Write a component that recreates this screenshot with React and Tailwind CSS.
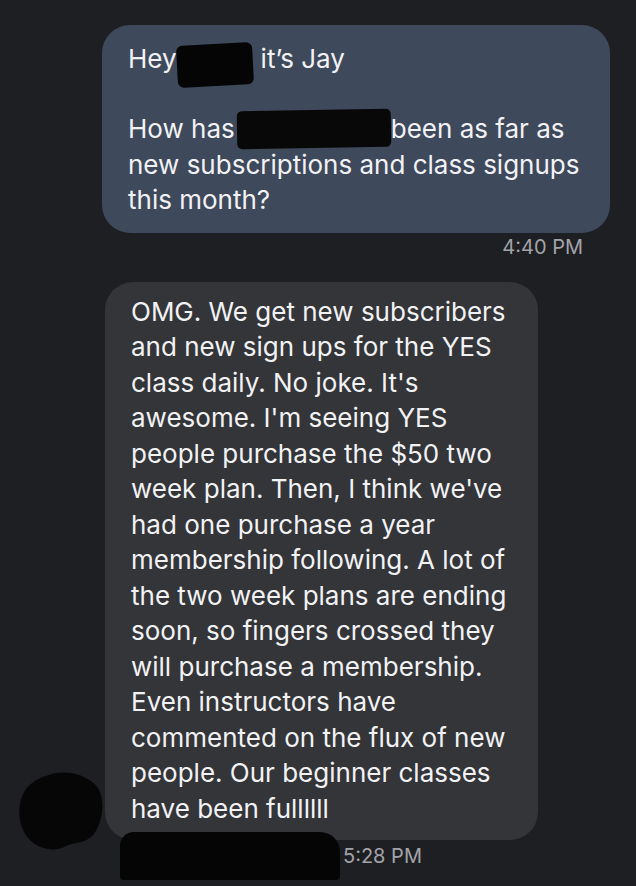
export default function App() {
    const reply = [
        'OMG. We get new subscribers',
        'and new sign ups for the YES',
        "class daily. No joke. It's",
        "awesome. I'm seeing YES",
        'people purchase the $50 two',
        "week plan. Then, I think we've",
        'had one purchase a year',
        'membership following. A lot of',
        'the two week plans are ending',
        'soon, so fingers crossed they',
        'will purchase a membership.',
        'Even instructors have',
        'commented on the flux of new',
        'people. Our beginner classes',
        'have been fullllll',
    ];

    return (
        <div
            className="relative w-[636px] h-[886px] overflow-hidden bg-[#1e1f23] text-white"
            style={{ fontFamily: 'Inter, "Liberation Sans", sans-serif' }}
        >
            <div className="pt-[25px] flex flex-col">
                {/* sent */}
                <div className="ml-[102px] w-[508px] rounded-[28px] bg-[#3e495c] px-[26px] py-[15px] text-[26px] leading-[35.5px] text-[#f2f2f4]">
                    <div className="h-[35.5px] whitespace-nowrap">
                        <span>Hey</span>
                        <span className="inline-block align-middle w-[76px] h-[42px] translate-y-[4px] -rotate-3 rounded-[6px] bg-[#050505]" />
                        <span className="ml-[8px]">it’s Jay</span>
                    </div>
                    <div className="h-[35.5px]" />
                    <div className="h-[35.5px] whitespace-nowrap">
                        <span>How has</span>
                        <span className="inline-block align-middle w-[154px] h-[38px] ml-[2px] -translate-y-[2px] -rotate-1 rounded-[5px] bg-[#080808]" />
                        <span>been as far as</span>
                    </div>
                    <div>new subscriptions and class signups</div>
                    <div>this month?</div>
                </div>
                <div className="mt-[1px] mr-[53px] text-right text-[20px] leading-[26px] text-[#a3a4a9]">
                    4:40 PM
                </div>

                {/* received */}
                <div className="ml-[105px] mt-[22px] w-[433px] rounded-[28px] bg-[#333539] pl-[26px] pt-[12px] pb-[14px] text-[26px] leading-[35.5px] text-[#f2f2f4]">
                    {reply.map((line, i) => (
                        <div key={i} className="whitespace-nowrap">{line}</div>
                    ))}
                </div>
                <div className="-mt-[8px] flex items-center">
                    <div className="ml-[120px] w-[220px] h-[48px] rounded-tl-[14px] rounded-tr-[20px] rounded-b-[4px] bg-[#050505]" />
                    <div className="ml-[3px] text-[20px] text-[#a3a4a9]">5:28 PM</div>
                </div>
            </div>

            {/* avatar scribble */}
            <svg className="absolute left-[16px] top-[770px]" width="88" height="82" viewBox="0 0 88 82">
                <path
                    d="M30 6 C48 -2 72 4 82 18 C90 32 86 52 78 64 C70 74 58 72 50 76 C40 82 24 80 14 70 C4 60 2 46 4 34 C6 20 16 10 30 6 Z"
                    fill="#060606"
                />
            </svg>
        </div>
    );
}
